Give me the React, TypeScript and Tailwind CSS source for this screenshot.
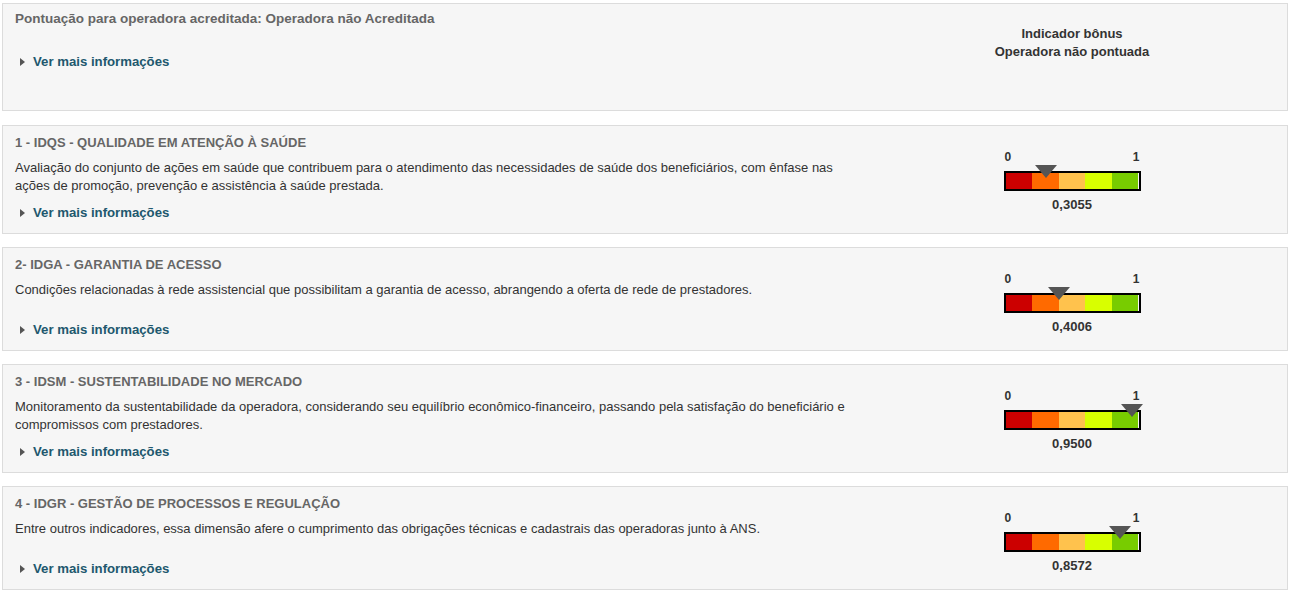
import React from "react"

interface Dimension {
  title: string
  description: string
  value: number
  label: string
}

const dimensions: Dimension[] = [
  {
    title: "1 - IDQS - QUALIDADE EM ATENÇÃO À SAÚDE",
    description:
      "Avaliação do conjunto de ações em saúde que contribuem para o atendimento das necessidades de saúde dos beneficiários, com ênfase nas ações de promoção, prevenção e assistência à saúde prestada.",
    value: 0.3055,
    label: "0,3055",
  },
  {
    title: "2- IDGA - GARANTIA DE ACESSO",
    description:
      "Condições relacionadas à rede assistencial que possibilitam a garantia de acesso, abrangendo a oferta de rede de prestadores.",
    value: 0.4006,
    label: "0,4006",
  },
  {
    title: "3 - IDSM - SUSTENTABILIDADE NO MERCADO",
    description:
      "Monitoramento da sustentabilidade da operadora, considerando seu equilíbrio econômico-financeiro, passando pela satisfação do beneficiário e compromissos com prestadores.",
    value: 0.95,
    label: "0,9500",
  },
  {
    title: "4 - IDGR - GESTÃO DE PROCESSOS E REGULAÇÃO",
    description:
      "Entre outros indicadores, essa dimensão afere o cumprimento das obrigações técnicas e cadastrais das operadoras junto à ANS.",
    value: 0.8572,
    label: "0,8572",
  },
]

const segments = ["bg-[#cc0000]", "bg-[#ff6a00]", "bg-[#ffc24d]", "bg-[#d8ff00]", "bg-[#78cc00]"]

function VerMais() {
  return (
    <div className="flex items-center h-[18px] pl-[5px] text-[13.2px] font-bold text-[#21586e] cursor-pointer">
      <span className="w-0 h-0 border-y-[4px] border-y-transparent border-l-[5px] border-l-[#555] mr-[8px]" />
      Ver mais informações
    </div>
  )
}

function Gauge({ value, label }: { value: number; label: string }) {
  return (
    <div className="w-[137px] flex flex-col">
      <div className="flex justify-between text-[12px] leading-[14px] font-bold text-[#333] px-[1px]">
        <span>0</span>
        <span>1</span>
      </div>
      <div className="relative mt-[7px] h-[20px] border-2 border-black flex">
        {segments.map((c) => (
          <div key={c} className={`flex-1 ${c}`} />
        ))}
        <div
          className="absolute top-[-8px] w-0 h-0 border-x-[11px] border-x-transparent border-t-[13px] border-t-[#555] -translate-x-1/2"
          style={{ left: `${value * 100}%` }}
        />
      </div>
      <div className="mt-[7px] text-center text-[13px] leading-[14px] font-bold text-[#333]">{label}</div>
    </div>
  )
}

export default function App() {
  return (
    <div className="bg-white pl-[2px] pr-[4px] pt-[3px] flex flex-col gap-[13px] font-['Liberation_Sans',Arial,sans-serif]">
      <div className="border border-[#dcdcdc] bg-[#f6f6f6] pl-[12px] pt-[7px] h-[108px] mb-[1px] flex">
        <div className="w-[945px]">
          <div className="text-[13.5px] leading-[16px] font-bold text-[#666]">
            Pontuação para operadora acreditada: Operadora não Acreditada
          </div>
          <div className="mt-[26px]">
            <VerMais />
          </div>
        </div>
        <div className="w-[224px] pt-[14px] text-center text-[13px] leading-[18px] font-bold text-[#333]">
          <div>Indicador bônus</div>
          <div>Operadora não pontuada</div>
        </div>
      </div>

      {dimensions.map((d) => (
        <div key={d.title} className="border border-[#dcdcdc] bg-[#f6f6f6] pl-[12px] pt-[9px] pb-[11px] flex">
          <div className="w-[945px]">
            <div className="text-[13px] leading-[16px] font-bold text-[#666]">{d.title}</div>
            <div className="mt-[8px] w-[840px] min-h-[31px] text-[13px] leading-[18px] text-[#333]">
              {d.description}
            </div>
            <div className="mt-[9px]">
              <VerMais />
            </div>
          </div>
          <div className="w-[224px] pt-[15px] flex justify-center">
            <Gauge value={d.value} label={d.label} />
          </div>
        </div>
      ))}
    </div>
  )
}
